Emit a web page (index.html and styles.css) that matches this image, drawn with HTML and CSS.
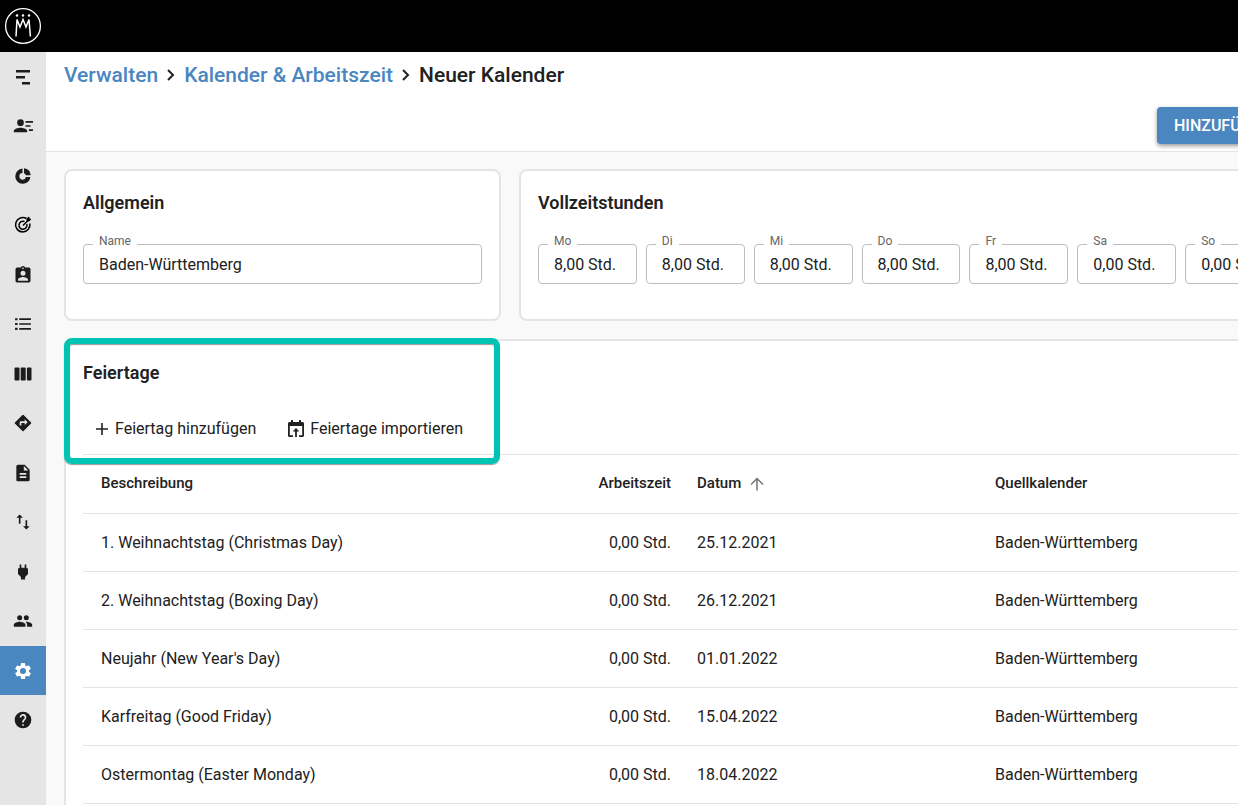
FILE: index.html
```
<!DOCTYPE html>
<html lang="de">
<head>
    <title>Neuer Kalender</title>
    <meta charset="utf-8">
    <link rel="stylesheet" href="styles.css">
</head>
<body>
<header class="topbar">
    <svg class="logo" viewBox="0 0 38 38" width="38" height="38" fill="none" stroke="#fff">
        <circle cx="19" cy="19" r="17.4" stroke-width="1.3"/>
        <path d="M12 29.500L13 12.500L16 20L19 12.500L22 20L25 12.500L26.400 29.500" stroke-width="1.5"/>
        <g fill="#fff" stroke="none">
            <circle cx="13" cy="8.500" r="1.200"/>
            <circle cx="19" cy="8.500" r="1.200"/>
            <circle cx="25" cy="8.500" r="1.200"/>
        </g>
    </svg>
</header>
<div class="page">
    <nav class="sidebar">
        <a href="#" aria-label="Projekte"><svg viewBox="0 0 20 20"><path d="M3 3h14v2.500H3zM3 9h9v2.500H3zM9 15h8v2.500H9z"/></svg></a>
        <a href="#" aria-label="Ressourcen"><svg viewBox="0 0 24 24"><path d="M9 4a4 4 0 1 0 0 8 4 4 0 0 0 0-8zM1 18v1.500h16V18c0-2.700-5.300-4-8-4s-8 1.300-8 4zM15 6h9v2h-9zM15 11h6v2h-6zM19 16h5v2h-5z"/></svg></a>
        <a href="#" aria-label="Auslastung"><svg viewBox="0 0 20 20"><path d="M9.500 2.600v4.500a3.300 3.300 0 1 0 3.400 3.900h4.500A7.600 7.600 0 1 1 9.500 2.600zM11 2.300a7.600 7.600 0 0 1 6.700 6.900h-4.800A3.300 3.300 0 0 0 11 7.200z"/></svg></a>
        <a href="#" aria-label="Ziele"><svg viewBox="0 0 20 20" fill="none" stroke="#000" stroke-width="1.500"><path d="M13.500 3.500A7.200 7.200 0 1 0 16.900 8.500M11.500 6.500A4 4 0 1 0 13.800 9M10 10.500l5-5" /><path d="M14 6V3.500L16 2v2.200h2L16 6z" fill="#000" stroke-width="1"/></svg></a>
        <a href="#" aria-label="Kontakte"><svg viewBox="0 0 24 24"><path d="M19 3h-4.200a3 3 0 0 0-5.600 0H5a2 2 0 0 0-2 2v14c0 1.100.9 2 2 2h14a2 2 0 0 0 2-2V5a2 2 0 0 0-2-2zm-7 0a1 1 0 1 1 0 2 1 1 0 0 1 0-2zm0 4a3 3 0 1 1 0 6 3 3 0 0 1 0-6zm6 12H6v-1.400c0-2 4-3.100 6-3.100s6 1.100 6 3.100z"/></svg></a>
        <a href="#" aria-label="Liste"><svg viewBox="0 0 24 24"><path d="M2.500 5h3v2.500h-3zM2.500 10.800h3v2.500h-3zM2.500 16.600h3v2.500h-3zM7.500 5.200h14v2h-14zM7.500 11h14v2h-14zM7.500 16.800h14v2h-14z"/></svg></a>
        <a href="#" aria-label="Board"><svg viewBox="0 0 20 20"><rect x="1.500" y="3.500" width="5" height="13" rx="1"/><rect x="7.700" y="3.500" width="5" height="13" rx="1"/><rect x="13.900" y="3.500" width="4.600" height="13" rx="1"/></svg></a>
        <a href="#" aria-label="Meilensteine"><svg viewBox="0 0 24 24"><path d="M21.700 11.300l-9-9a1 1 0 0 0-1.400 0l-9 9a1 1 0 0 0 0 1.400l9 9c.4.400 1 .4 1.400 0l9-9a1 1 0 0 0 0-1.400zM14 14.500V12h-4v3H8v-4c0-.6.4-1 1-1h5V7.500l3.500 3.500z"/></svg></a>
        <a href="#" aria-label="Berichte"><svg viewBox="0 0 24 24"><path d="M14 2H6a2 2 0 0 0-2 2v16c0 1.100.9 2 2 2h12a2 2 0 0 0 2-2V8zm2 16H8v-2h8zm0-4H8v-2h8zm-3-5V3.500L18.500 9z"/></svg></a>
        <a href="#" aria-label="Import und Export"><svg viewBox="0 0 24 24"><path d="M8 3L4 7h3v7h2V7h3zM17 17v-7h-2v7h-3l4 4 4-4z"/></svg></a>
        <a href="#" aria-label="Integrationen"><svg viewBox="0 0 24 24"><path d="M16 7V3h-2v4h-4V3H8v4c-1.100 0-2 .9-2 2v5.500L9.500 18v3h5v-3l3.500-3.500V9c0-1.100-.9-2-2-2z"/></svg></a>
        <a href="#" aria-label="Benutzer"><svg viewBox="0 0 24 24"><path d="M16 11a3 3 0 1 0 0-6 3 3 0 0 0 0 6zM8 11a3 3 0 1 0 0-6 3 3 0 0 0 0 6zM8 13c-2.300 0-7 1.200-7 3.500V19h14v-2.500C15 14.200 10.300 13 8 13zM16 13l-1 .1c1.200.8 2 2 2 3.400V19h6v-2.500c0-2.300-4.700-3.500-7-3.500z"/></svg></a>
        <a href="#" class="active" aria-label="Verwalten"><svg viewBox="0 0 24 24"><path d="M19.140 12.940c.04-.3.060-.61.060-.94s-.02-.64-.07-.94l2.030-1.580a.49.490 0 0 0 .12-.61l-1.920-3.320a.49.490 0 0 0-.59-.22l-2.390.96a7 7 0 0 0-1.620-.94l-.36-2.540a.48.480 0 0 0-.48-.41h-3.840a.47.470 0 0 0-.47.410l-.36 2.540c-.59.240-1.130.57-1.620.94l-2.390-.96a.47.470 0 0 0-.59.220L2.740 8.870a.47.470 0 0 0 .12.610l2.030 1.580a6 6 0 0 0 0 1.880l-2.030 1.580a.49.490 0 0 0-.12.610l1.920 3.320c.12.220.37.290.59.220l2.390-.96c.5.380 1.030.7 1.620.94l.36 2.540c.05.240.24.410.48.410h3.840c.24 0 .44-.17.470-.41l.36-2.540a7 7 0 0 0 1.620-.94l2.390.96c.22.080.47 0 .59-.22l1.920-3.320a.47.470 0 0 0-.12-.61zM12 15.600a3.600 3.600 0 1 1 0-7.200 3.600 3.600 0 0 1 0 7.200z"/></svg></a>
        <a href="#" aria-label="Hilfe"><svg viewBox="0 0 24 24"><path d="M12 2a10 10 0 1 0 0 20 10 10 0 0 0 0-20zm1 17h-2v-2h2zm2.070-7.750l-.9.920C13.450 12.900 13 13.500 13 15h-2v-.5c0-1.100.45-2.100 1.170-2.830l1.240-1.260A2 2 0 1 0 10 9H8a4 4 0 1 1 7.070 2.250z"/></svg></a>
    </nav>
    <main>
        <div class="head">
            <h1 class="breadcrumb">
                <a href="#">Verwalten</a>
                <svg viewBox="0 0 8 12" width="8" height="12"><path d="M1 1l5 5-5 5"/></svg>
                <a href="#">Kalender &amp; Arbeitszeit</a>
                <svg viewBox="0 0 8 12" width="8" height="12"><path d="M1 1l5 5-5 5"/></svg>
                <span>Neuer Kalender</span>
            </h1>
            <button type="button" class="primary">HINZUFÜGEN</button>
        </div>
        <div class="content">
            <div class="cards">
                <section class="card general">
                    <h2>Allgemein</h2>
                    <div class="field">
                        <label for="name">Name</label>
                        <input type="text" id="name" value="Baden-Württemberg">
                    </div>
                </section>
                <section class="card hours">
                    <h2>Vollzeitstunden</h2>
                    <div class="days">
                        <div class="field"><label for="mo">Mo</label><input type="text" id="mo" value="8,00 Std."></div>
                        <div class="field"><label for="di">Di</label><input type="text" id="di" value="8,00 Std."></div>
                        <div class="field"><label for="mi">Mi</label><input type="text" id="mi" value="8,00 Std."></div>
                        <div class="field"><label for="do">Do</label><input type="text" id="do" value="8,00 Std."></div>
                        <div class="field"><label for="fr">Fr</label><input type="text" id="fr" value="8,00 Std."></div>
                        <div class="field"><label for="sa">Sa</label><input type="text" id="sa" value="0,00 Std."></div>
                        <div class="field"><label for="so">So</label><input type="text" id="so" value="0,00 Std."></div>
                    </div>
                </section>
            </div>
            <section class="card holidays">
                <div class="highlight"></div>
                <h2>Feiertage</h2>
                <div class="toolbar">
                    <button type="button"><svg viewBox="0 0 14 14" width="14" height="14"><path d="M6.200 1h1.600v5.200H13v1.600H7.800V13H6.200V7.800H1V6.200h5.200z"/></svg>Feiertag hinzufügen</button>
                    <button type="button"><svg viewBox="0 0 16 18" width="16" height="18"><path d="M3 0h2v2h6V0h2v2h1.500c.8 0 1.500.7 1.500 1.500v12c0 .8-.7 1.500-1.500 1.500H11v-1.800h3.200V6H1.800v9.200H5V17H1.500C.7 17 0 16.300 0 15.500v-12C0 2.700.7 2 1.500 2H3zM8 8l3.300 3.400H8.900V17H7.100v-5.600H4.700z"/></svg>Feiertage importieren</button>
                </div>
                <table>
                    <thead>
                    <tr>
                        <th class="desc">Beschreibung</th>
                        <th class="time">Arbeitszeit</th>
                        <th class="date">Datum <svg viewBox="0 0 14 14" width="14" height="14"><path d="M7 13.500V1.500M1 7.500l6-6 6 6"/></svg></th>
                        <th>Quellkalender</th>
                    </tr>
                    </thead>
                    <tbody>
                    <tr><td>1. Weihnachtstag (Christmas Day)</td><td class="time">0,00 Std.</td><td>25.12.2021</td><td>Baden-Württemberg</td></tr>
                    <tr><td>2. Weihnachtstag (Boxing Day)</td><td class="time">0,00 Std.</td><td>26.12.2021</td><td>Baden-Württemberg</td></tr>
                    <tr><td>Neujahr (New Year's Day)</td><td class="time">0,00 Std.</td><td>01.01.2022</td><td>Baden-Württemberg</td></tr>
                    <tr><td>Karfreitag (Good Friday)</td><td class="time">0,00 Std.</td><td>15.04.2022</td><td>Baden-Württemberg</td></tr>
                    <tr><td>Ostermontag (Easter Monday)</td><td class="time">0,00 Std.</td><td>18.04.2022</td><td>Baden-Württemberg</td></tr>
                    </tbody>
                </table>
            </section>
        </div>
    </main>
</div>
</body>
</html>
```
FILE: styles.css
```
* {
    box-sizing: border-box;
}

body {
    display: flex;
    flex-direction: column;
    height: 100vh;
    margin: 0;
    overflow: hidden;
    background: #f9f9f9;
    color: #212121;
    font: 16px/20px Roboto, "Liberation Sans", sans-serif;
}

.topbar {
    flex: none;
    height: 52px;
    padding: 7px 4px;
    background: #000;
}

.logo {
    display: block;
}

.page {
    display: flex;
    flex: 1;
    min-height: 0;
}

/* sidebar */
.sidebar {
    flex: none;
    width: 46px;
    background: #e5e5e5;
}

.sidebar a {
    display: flex;
    align-items: center;
    justify-content: center;
    height: 50px;
}

.sidebar a:nth-child(odd) {
    height: 49px;
}

.sidebar svg {
    width: 20px;
    height: 20px;
    fill: #1c1c1c;
}

.sidebar svg[fill="none"] {
    fill: none;
}

.sidebar .active {
    background: #4a86bf;
}

.sidebar .active svg {
    fill: #fff;
}

/* the form needs its full width, narrow windows cut it off */
main {
    flex: 1 0 0;
    min-width: 1275px;
}

/* title and main action */
.head {
    display: flex;
    flex-direction: column;
    height: 100px;
    padding: 9px 18px 7px;
    justify-content: space-between;
    background: #fff;
    border-bottom: 1px solid #e4e4e4;
}

.breadcrumb {
    display: flex;
    align-items: center;
    gap: 9px;
    margin: 0;
    font-size: 21px;
    line-height: 28px;
    font-weight: 500;
}

.breadcrumb a {
    color: #4a86bf;
    text-decoration: none;
}

.breadcrumb svg {
    fill: none;
    stroke: #212121;
    stroke-width: 2;
}

.primary {
    align-self: flex-end;
    min-width: 146px;
    height: 37px;
    padding: 0 17px;
    border: 0;
    border-radius: 4px;
    background: #4a86bf;
    box-shadow: 0 2px 4px rgba(0, 0, 0, .4);
    color: #fff;
    font: 500 16px/20px Roboto, sans-serif;
    text-align: left;
}

.content {
    padding: 17px 18px;
}

.cards {
    display: flex;
    gap: 18px;
    margin-bottom: 18px;
}

.card {
    padding: 21px 17px 35px;
    background: #fff;
    border: 2px solid #e4e4e4;
    border-radius: 8px;
}

.general {
    flex: 0 0 437px;
}

.hours {
    flex: 1;
    min-width: 0;
}

.card h2 {
    margin: 0;
    font-size: 18px;
    line-height: 22px;
    font-weight: 600;
}

/* outlined inputs */
.field {
    position: relative;
    min-width: 0;
    margin-top: 30px;
}

.field label {
    position: absolute;
    top: -10px;
    left: 10px;
    padding: 0 6px;
    background: #fff;
    color: #666;
    font-size: 12px;
    line-height: 14px;
}

.field input {
    display: block;
    width: 100%;
    height: 40px;
    padding: 0 15px;
    border: 1px solid #bdbdbd;
    border-radius: 4px;
    background: #fff;
    color: #212121;
    font: 16px/20px Roboto, sans-serif;
}

.days {
    display: grid;
    grid-template-columns: repeat(7, 1fr);
    gap: 9px;
}

/* holidays */
.holidays {
    position: relative;
}

.highlight {
    position: absolute;
    top: -3px;
    left: -2px;
    width: 436px;
    height: 126px;
    border: 6px solid #00c4b3;
    border-radius: 8px;
    box-shadow: 0 1px 1px rgba(0, 0, 0, .4), inset 0 1px 1px rgba(0, 0, 0, .4);
    pointer-events: none;
}

.toolbar {
    display: flex;
    gap: 32px;
    padding: 35px 12px 15px;
}

.toolbar button {
    display: flex;
    align-items: center;
    gap: 6px;
    padding: 0;
    border: 0;
    background: none;
    color: #212121;
    font: 16px/20px Roboto, sans-serif;
}

.toolbar svg {
    fill: #212121;
}

table {
    width: 100%;
    border-collapse: collapse;
    table-layout: fixed;
    border-top: 1px solid #e4e4e4;
}

th, td {
    height: 58px;
    padding: 0 13px;
    border-bottom: 1px solid #e4e4e4;
    text-align: left;
    font-weight: 400;
}

th {
    height: 59px;
    padding-bottom: 3px;
    font-size: 15px;
    font-weight: 500;
}

th:first-child, td:first-child {
    padding-left: 18px;
}

th svg {
    margin-left: 5px;
    vertical-align: -3px;
    fill: none;
    stroke: #757575;
    stroke-width: 1.5;
}

.desc {
    width: 451px;
}

.time {
    width: 150px;
    text-align: right;
}

.date {
    width: 298px;
}
```
